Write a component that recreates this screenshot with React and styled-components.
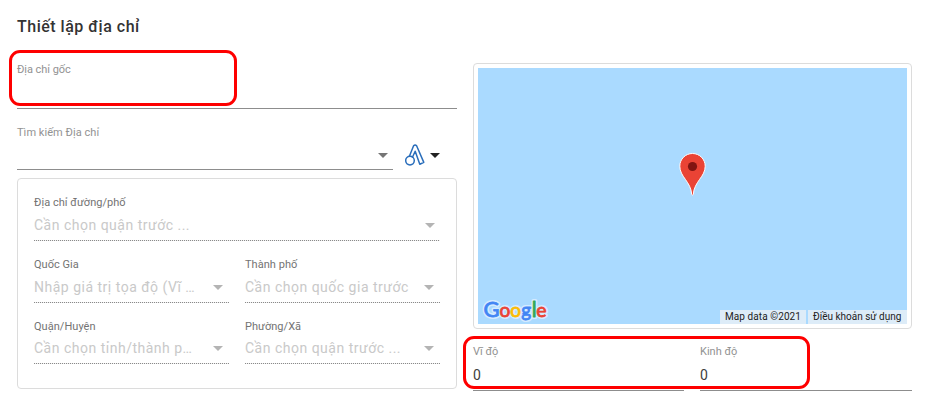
import React from "react";
import styled, { createGlobalStyle } from "styled-components";

const GlobalStyle = createGlobalStyle`
  *, *::before, *::after { box-sizing: border-box; }
  body { margin: 0; background: #fff; font-family: Roboto, sans-serif; overflow: hidden; }
`;

const Page = styled.main`
  position: relative;
  width: 927px;
  height: 405px;
  padding: 15px 15px 0 17px;
`;

const Title = styled.h1`
  margin: 0;
  height: 24px;
  font-size: 16px;
  font-weight: 500;
  line-height: 24px;
  letter-spacing: 0.5px;
  color: #333;
`;

const Columns = styled.div`
  display: grid;
  grid-template-columns: 440px 439px;
  column-gap: 16px;
`;

const LeftColumn = styled.section`
  display: flex;
  flex-direction: column;
  padding-top: 22px;
`;

const RightColumn = styled.section`
  display: flex;
  flex-direction: column;
  padding-top: 24px;
`;

const Field = styled.div`
  flex: none;
  width: ${(p) => (p.$width ? `${p.$width}px` : "auto")};
  height: ${(p) => p.$height}px;
  border-bottom: 1px solid #8d8d8d;
`;

const Label = styled.div`
  height: 16px;
  padding-top: 1px;
  font-size: 11px;
  line-height: 16px;
  letter-spacing: ${(p) => p.$spacing ?? 0}px;
  white-space: nowrap;
  color: ${(p) => (p.$strong ? "#737373" : "#929292")};
`;

const Value = styled.div`
  margin-top: 8px;
  height: 16px;
  font-size: 14px;
  line-height: 16px;
  color: #3c3c3c;
`;

const SearchRow = styled.div`
  display: flex;
  margin-top: 15px;
  height: 46px;
`;

const SearchBody = styled.div`
  display: flex;
  align-items: center;
  justify-content: flex-end;
  height: 16px;
  margin-top: 7px;
  padding-right: 5px;
`;

const SourceButton = styled.button`
  display: flex;
  align-items: center;
  gap: 5px;
  height: 24px;
  margin: 19px 0 0 12px;
  padding: 0;
  border: 0;
  background: none;
`;

const AddressPanel = styled.div`
  display: grid;
  grid-template-columns: 195px 195px;
  column-gap: 16px;
  align-content: start;
  height: 211px;
  margin-top: 8px;
  padding: 15px 16px 0;
  border: 1px solid #dcdcdc;
  border-radius: 4px;
`;

const SelectField = styled.div`
  grid-column: ${(p) => (p.$wide ? "1 / -1" : "auto")};
  height: ${(p) => p.$height}px;
  margin-bottom: 15px;
  background: repeating-linear-gradient(90deg, #8a8a8a 0 1px, #f0f0f0 1px 2px) bottom / 100% 1px no-repeat;
`;

const SelectBody = styled.div`
  display: flex;
  align-items: center;
  justify-content: space-between;
  height: 20px;
  margin-top: ${(p) => p.$gap}px;
  padding-right: ${(p) => (p.$wide ? 5 : 6)}px;
`;

const Placeholder = styled.span`
  width: ${(p) => (p.$clip ? "163px" : "auto")};
  overflow: hidden;
  text-overflow: ellipsis;
  white-space: nowrap;
  font-size: 14px;
  line-height: 20px;
  letter-spacing: 0.5px;
  color: #c9c9c9;
`;

const MapCard = styled.div`
  height: 266px;
  padding: 4px;
  border: 1px solid #dcdcdc;
  border-radius: 4px;
`;

const MapView = styled.div`
  position: relative;
  height: 256px;
  background: #aadaff;
`;

const Pin = styled.svg`
  position: absolute;
  left: 201px;
  top: 84px;
`;

const GoogleMark = styled.svg`
  position: absolute;
  left: 2px;
  bottom: 0;
`;

const Credits = styled.div`
  position: absolute;
  right: 0;
  bottom: 0;
  display: flex;
  gap: 2px;
`;

const Credit = styled.span`
  width: ${(p) => p.$width}px;
  height: 14px;
  padding-left: 5px;
  white-space: nowrap;
  font-size: 10px;
  line-height: 14px;
  letter-spacing: ${(p) => p.$spacing}px;
  color: #222;
  background: #ddecf8;
`;

const Coordinates = styled.div`
  display: grid;
  grid-template-columns: 211px 212px;
  column-gap: 16px;
  margin-top: 14px;
`;

const Highlight = styled.div`
  position: absolute;
  left: ${(p) => p.$x}px;
  top: ${(p) => p.$y}px;
  width: ${(p) => p.$w}px;
  height: ${(p) => p.$h}px;
  border: 3px solid #fe0000;
  border-radius: 11px;
  pointer-events: none;
`;

const Caret = ({ color }) => (
  <svg width="10" height="5" viewBox="0 0 10 5" aria-hidden="true">
    <path d="M0 0h10L5 5z" fill={color} />
  </svg>
);

const SourceIcon = () => (
  <svg width="20" height="22" viewBox="0 0 20 22" fill="none" stroke="#2a6ebb" strokeWidth="1.5" strokeLinejoin="round" aria-hidden="true">
    <circle cx="5" cy="16.600" r="4.300" />
    <path d="M4.400 12.200 8.600 1.800q1.500-1.800 3 0L18.800 18.400l-4 1.800-4.600-13-3 6.600" />
  </svg>
);

const Select = ({ label, text, wide, height = 47, gap, clip }) => (
  <SelectField $wide={wide} $height={height}>
    <Label $strong $spacing={0.04}>{label}</Label>
    <SelectBody $gap={gap} $wide={wide}>
      <Placeholder $clip={clip}>{text}</Placeholder>
      <Caret color="#b4b4b4" />
    </SelectBody>
  </SelectField>
);

const letters = [
  ["G", "#4285f4", -0.5, 22],
  ["o", "#ea4335", 15.5, 19],
  ["o", "#fbbc05", 26.2, 19],
  ["g", "#4285f4", 37.3, 19],
  ["l", "#34a853", 47.7, 21],
  ["e", "#ea4335", 52.200, 19.5],
];

export default function App() {
  return (
    <>
      <GlobalStyle />
      <Page>
        <Title>Thiết lập địa chỉ</Title>
        <Columns>
          <LeftColumn>
            <Field $height={48}>
              <Label $spacing={-0.05}>Địa chỉ gốc</Label>
            </Field>
            <SearchRow>
              <Field $width={376} $height={46}>
                <Label $spacing={0.05}>Tìm kiếm Địa chỉ</Label>
                <SearchBody>
                  <Caret color="#757575" />
                </SearchBody>
              </Field>
              <SourceButton aria-label="Nguồn địa chỉ">
                <SourceIcon />
                <Caret color="#222" />
              </SourceButton>
            </SearchRow>
            <AddressPanel>
              <Select wide label="Địa chỉ đường/phố" text="Cần chọn quận trước ..." gap={5} />
              <Select label="Quốc Gia" text="Nhập giá trị tọa độ (Vĩ …" clip gap={5} />
              <Select label="Thành phố" text="Cần chọn quốc gia trước" gap={5} />
              <Select label="Quận/Huyện" text="Cần chọn tỉnh/thành p…" clip height={46} gap={4} />
              <Select label="Phường/Xã" text="Cần chọn quận trước ..." height={46} gap={4} />
            </AddressPanel>
          </LeftColumn>
          <RightColumn>
            <MapCard>
              <MapView>
                <Pin width="28" height="45" viewBox="0 0 28 45" aria-label="Vị trí">
                  <path
                    d="M13.500 1.500C6.500 1.500.8 7.100.8 14.200c0 5 2.500 9 5.600 13.200 3 4.300 6 8.900 6.300 15 .1 1 1.500 1 1.600 0 .3-6.100 3.300-10.700 6.300-15 3.100-4.200 5.600-8.200 5.600-13.200C26.200 7.100 20.500 1.500 13.500 1.500z"
                    fill="#ea4335"
                    stroke="#fff"
                    strokeWidth="1"
                  />
                  <circle cx="13.500" cy="14.500" r="4.600" fill="#811411" />
                </Pin>
                <GoogleMark width="72" height="28" viewBox="0 0 72 28" aria-label="Google">
                  <g
                    transform="translate(4 21)"
                    fontFamily="Lato, sans-serif"
                    fontWeight="400"
                    strokeLinejoin="round"
                  >
                    {letters.map(([letter, color, x, size], i) => (
                      <text key={`halo-${i}`} x={x} fontSize={size} fill="#d5ebff" stroke="#d5ebff" strokeWidth="4" aria-hidden="true">{letter}</text>
                    ))}
                    {letters.map(([letter, color, x, size], i) => (
                      <text key={i} x={x} fontSize={size} fill={color} stroke={color} strokeWidth="0.800">{letter}</text>
                    ))}
                  </g>
                </GoogleMark>
                <Credits>
                  <Credit $width={86} $spacing={0.08}>Map data ©2021</Credit>
                  <Credit $width={99} $spacing={0}>Điều khoản sử dụng</Credit>
                </Credits>
              </MapView>
            </MapCard>
            <Coordinates>
              <Field $height={48}>
                <Label>Vĩ độ</Label>
                <Value>0</Value>
              </Field>
              <Field $height={48}>
                <Label>Kinh độ</Label>
                <Value>0</Value>
              </Field>
            </Coordinates>
          </RightColumn>
        </Columns>
        <Highlight $x={9} $y={50} $w={228} $h={56} />
        <Highlight $x={463} $y={336} $w={347} $h={53} />
      </Page>
    </>
  );
}
